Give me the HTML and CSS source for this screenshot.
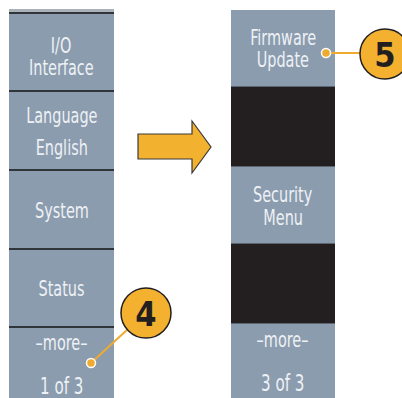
FILE: index.html
```html
<!DOCTYPE html>
<html lang="en">
<head>
	<meta charset="UTF-8">
	<title>Utility menu pages</title>
	<link rel="stylesheet" href="styles.css">
</head>
<body>
	<div class="page">
		<div class="panel panel-left">
			<div class="cap"></div>
			<div class="key key-io"><span>I/O</span><span>Interface</span></div>
			<div class="key key-lang"><span>Language</span><span class="sub">English</span></div>
			<div class="key key-tall"><span>System</span></div>
			<div class="key"><span>Status</span></div>
			<div class="key key-more"><span>–more–</span><span class="page-no">1 of 3</span></div>
		</div>

		<div class="arrow-col">
			<svg class="arrow" width="117" height="60" viewBox="114 117 117 60">
				<polygon points="138,134 192,134 192,121 211,147 192,173 192,159 138,159" fill="#f2b12f" stroke="#3a3a3a" stroke-width="1.2" stroke-linejoin="miter"/>
			</svg>
		</div>

		<div class="panel panel-right">
			<div class="key key-first"><span>Firmware</span><span>Update</span></div>
			<div class="key key-blank"></div>
			<div class="key key-sec"><span>Security</span><span>Menu</span></div>
			<div class="key key-blank"></div>
			<div class="key key-more"><span>–more–</span><span class="page-no">3 of 3</span></div>
		</div>

		<!-- numbered callouts -->
		<svg class="callouts" width="402" height="398" viewBox="0 0 402 398">
			<line x1="326" y1="53" x2="361" y2="53" stroke="#f0ab2e" stroke-width="2"/>
			<circle cx="326" cy="53" r="4.5" fill="#f0ab2e" stroke="#fff" stroke-width="1.5"/>
			<circle cx="385" cy="54" r="25" fill="#f3b12f" stroke="#231f20" stroke-width="1.5"/>
			<text class="num" x="385" y="66.5">5</text>

			<line x1="91" y1="363" x2="128" y2="329" stroke="#f0ab2e" stroke-width="2"/>
			<circle cx="91" cy="363" r="4.5" fill="#f0ab2e" stroke="#fff" stroke-width="1.5"/>
			<circle cx="146" cy="313" r="25" fill="#f3b12f" stroke="#231f20" stroke-width="1.5"/>
			<text class="num" x="146" y="325.5">4</text>
		</svg>
	</div>
</body>
</html>
```

FILE: styles.css
```css
body{
	margin: 0;
	height: 398px;
	overflow: hidden;
	background: #fff;
	font-family: "DejaVu Sans Condensed", "DejaVu Sans", sans-serif;
	font-stretch: condensed;
}
.page{
	position: relative;
	display: flex;
	align-items: flex-start;
	height: 398px;
	padding-left: 9px;
}

/* soft keys */
.panel{
	display: flex;
	flex-direction: column;
	height: 100%;
	background: #8b9caf;
}
.panel-left{
	width: 105px;
	margin-top: 9px;
}
.panel-right{
	width: 104px;
	margin-top: 10px;
}
.cap{
	height: 3px;
	background: #aab1b9;
}
.key{
	flex: none;
	box-sizing: border-box;
	height: 78px;
	padding-top: 2px;
	border-top: 2px solid #30353a;
	display: flex;
	flex-direction: column;
	align-items: center;
	justify-content: center;
	color: #eef1f4;
	font-size: 22px;
	line-height: 22px;
}
.key span{
	display: block;
	white-space: nowrap;
	transform: scaleX(.73);
}
.key-io{
	padding-top: 10px;
}
.key-lang,
.key-tall{
	height: 79px;
}
.key-lang .sub{
	margin-top: 10px;
}
.key-more{
	flex: 1;
	justify-content: flex-start;
	padding-top: 4px;
}
.key-more .page-no{
	margin-top: 21px;
	font-size: 23px;
	line-height: 23px;
}

.panel-right .key{
	border-top: 1px solid #5b6672;
}
.panel-right .key-first{
	border-top: none;
	height: 76px;
	padding-top: 2px;
}
.key-blank{
	height: 80px;
	background: #231f20;
}
.panel-right .key-sec{
	height: 77px;
	padding-top: 2px;
	line-height: 23px;
}
.panel-right .key-more{
	padding-top: 5px;
}
.panel-right .key-more .page-no{
	margin-top: 21px;
}

/* arrow between the two pages */
.arrow-col{
	width: 117px;
	flex: none;
}
.arrow{
	display: block;
	margin-top: 117px;
}

.callouts{
	position: absolute;
	left: 0;
	top: 0;
	pointer-events: none;
}
.num{
	font-family: "DejaVu Sans Condensed", "DejaVu Sans", sans-serif;
	font-stretch: condensed;
	font-weight: bold;
	font-size: 34px;
	fill: #231f20;
	text-anchor: middle;
}
```
